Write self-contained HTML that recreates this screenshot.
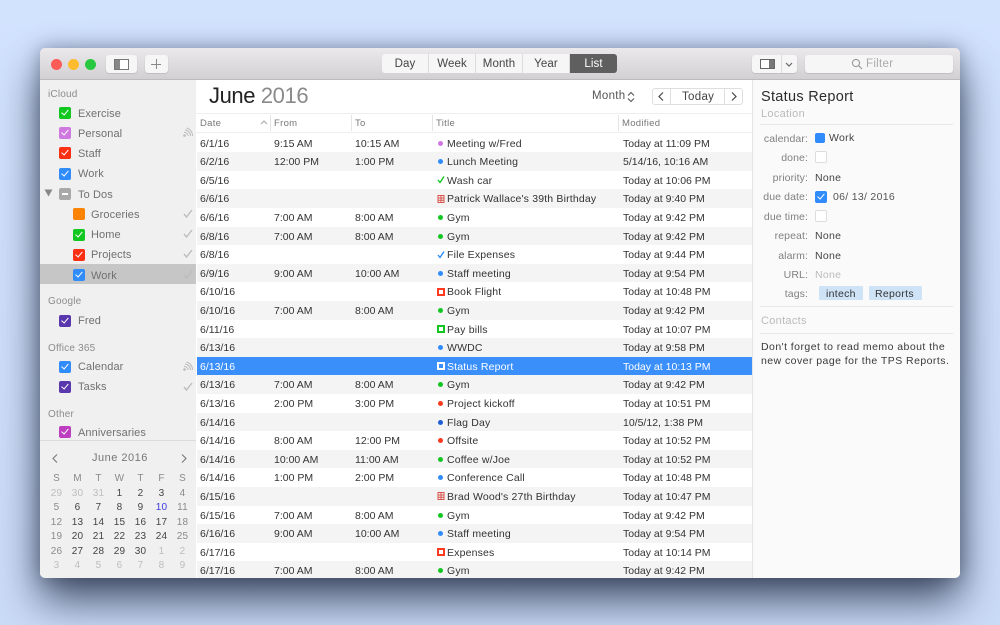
<!DOCTYPE html>
<html><head><meta charset="utf-8"><style>
html,body{margin:0;padding:0}
body{width:1000px;height:625px;overflow:hidden;position:relative;background:linear-gradient(180deg,#d2e3fe 0%,#cbdcf8 100%);font-family:"Liberation Sans",sans-serif;font-size:11px;letter-spacing:.3px;color:#3a3a3a}
#win{position:absolute;left:40px;top:48px;width:920px;height:530px;border-radius:5px;box-shadow:0 22px 42px rgba(30,40,65,.8),0 0 18px rgba(50,60,85,.4)}
.a{position:absolute;white-space:nowrap;line-height:14px}
.b{position:absolute;box-sizing:border-box}
#tb{position:absolute;left:40px;top:48px;width:920px;height:32px;border-radius:5px 5px 0 0;background:linear-gradient(180deg,#ebe9eb,#d2d0d2);border-bottom:1px solid #bdbcbd;box-sizing:border-box}
.light{position:absolute;top:59px;width:11px;height:11px;border-radius:50%}
.btn{position:absolute;top:55px;height:18px;background:#f6f6f6;border-radius:3px;box-shadow:0 .5px 1px rgba(0,0,0,.2)}
.seg{position:absolute;top:54px;height:19px;width:47px;text-align:center;line-height:21px;background:#f6f6f6;border-right:1px solid #dcdcdc;box-sizing:border-box;color:#444;font-size:11.5px;letter-spacing:.1px}
#side{position:absolute;left:40px;top:80px;width:156px;height:498px;background:#f0f0f0;border-radius:0 0 0 5px}
#main{position:absolute;left:196px;top:80px;width:556px;height:498px;background:#fff;overflow:hidden}
#panel{position:absolute;left:752px;top:80px;width:208px;height:498px;background:#fafafa;border-left:1px solid #e4e4e4;box-sizing:border-box;border-radius:0 0 5px 0}
.sh{color:#8c8c8c;font-size:10px;left:48px;margin-top:1px;letter-spacing:.2px}
.si{color:#707070;font-size:11px;left:78px;margin-top:1px;letter-spacing:.1px}
.cb{position:absolute;width:11.5px;height:11.5px;border-radius:2px}
.cb.c::after{content:"";position:absolute;left:3.5px;top:1px;width:2.5px;height:6px;border-right:1.5px solid #fff;border-bottom:1.5px solid #fff;transform:rotate(40deg)}
#rows{position:absolute;left:197px;top:133.7px;width:555px;height:444.3px;overflow:hidden}
.r{position:relative;height:18.6px;line-height:20px;color:#333;font-size:10.5px;letter-spacing:0}
.r:nth-child(even){background:#f4f4f5}
.r span{position:absolute;top:0;white-space:nowrap}
.r .d{left:3px}.r .f{left:77px}.r .o{left:158px}.r .n{left:250px;letter-spacing:.17px}.r .m{left:426px}
.r .i{position:absolute;box-sizing:border-box}
.dot{left:241px;top:7px;width:5px;height:5px;border-radius:50%}
.sq{left:240px;top:5.5px;width:8px;height:8px;border:2px solid}
.ck{left:240px;top:4.5px;width:8px;height:9px}
.ch{position:absolute;top:99px;font-size:9.5px;color:#777}
.lb{position:absolute;right:192px;left:auto;color:#808080;font-size:10.5px;line-height:14px;white-space:nowrap;margin-top:1px;letter-spacing:.1px}
.v{left:815px;color:#444;font-size:10.5px;margin-top:1px}
.hr{position:absolute;left:760px;width:193px;height:1px;background:#e8e8e8}
#cal{position:absolute;left:46px;top:472px;display:grid;grid-template-columns:repeat(7,21px);grid-auto-rows:14.5px;text-align:center;line-height:14.5px;font-size:10px;color:#444;letter-spacing:.2px}
#cal .l{color:#bdbdbd}#cal .g{color:#8a8a8a}
</style></head><body>
<div id="win"></div>
<div id="tb"></div>
<div class="light" style="left:51px;background:#fc5b57"></div>
<div class="light" style="left:68px;background:#fdbc2e"></div>
<div class="light" style="left:85px;background:#2ac840"></div>
<div class="btn" style="left:106px;width:31px"></div>
<div class="b" style="left:114px;top:59px;width:15px;height:11px;border:1px solid #777;background:linear-gradient(90deg,#888 0 5px,#fff 5px)"></div>
<div class="btn" style="left:145px;width:23px"></div>
<div class="b" style="left:151px;top:64px;width:10px;height:1px;background:#888"></div>
<div class="b" style="left:156px;top:59px;width:1px;height:10px;background:#888"></div>

<div class="seg" style="left:382px;border-radius:3px 0 0 3px">Day</div>
<div class="seg" style="left:429px">Week</div>
<div class="seg" style="left:476px">Month</div>
<div class="seg" style="left:523px">Year</div>
<div class="seg" style="left:570px;background:#5f5f5f;color:#fff;border:0;border-radius:0 3px 3px 0">List</div>

<div class="btn" style="left:752px;width:45px"></div>
<div class="b" style="left:781px;top:55px;width:1px;height:18px;background:#ddd"></div>
<div class="b" style="left:760px;top:59px;width:15px;height:10px;border:1px solid #666;background:linear-gradient(90deg,#fff 0 8px,#777 8px)"></div>
<svg class="b" style="left:785px;top:62px" width="8" height="5" viewBox="0 0 8 5"><path d="M1 1l3 3 3-3" fill="none" stroke="#666" stroke-width="1.2"/></svg>
<div class="btn" style="left:805px;width:148px"></div>
<svg class="b" style="left:851px;top:58px" width="12" height="12" viewBox="0 0 12 12"><circle cx="5" cy="5" r="3.6" fill="none" stroke="#999" stroke-width="1.1"/><path d="M7.7 7.700L11 11" stroke="#999" stroke-width="1.2"/></svg>
<div class="a" style="left:866px;top:57px;color:#aaa;font-size:11.5px">Filter</div>

<div id="side"></div>
<div class="a sh" style="top:87px">iCloud</div>
<div class="cb c" style="left:59px;top:107px;background:#12c71f"></div><div class="a si" style="top:105.500px">Exercise</div>
<div class="cb c" style="left:59px;top:127px;background:#cf78e0"></div><div class="a si" style="top:125.500px">Personal</div>
<div class="cb c" style="left:59px;top:147px;background:#fb2f12"></div><div class="a si" style="top:146px">Staff</div>
<div class="cb c" style="left:59px;top:168px;background:#2f8cfa"></div><div class="a si" style="top:166px">Work</div>
<svg class="b" style="left:44px;top:189px" width="9" height="8" viewBox="0 0 9 8"><path d="M.5 .5h8L4.500 7.500z" fill="#888"/></svg>
<div class="cb" style="left:59px;top:188px;background:#a9a9a9"></div><div class="b" style="left:61.500px;top:193px;width:6px;height:1.500px;background:#fff"></div><div class="a si" style="top:186.500px">To Dos</div>
<div class="cb" style="left:73px;top:208px;background:#fb8306"></div><div class="a si" style="left:91px;top:207px">Groceries</div>
<div class="cb c" style="left:73px;top:229px;background:#12c71f"></div><div class="a si" style="left:91px;top:227px">Home</div>
<div class="cb c" style="left:73px;top:249px;background:#fb2f12"></div><div class="a si" style="left:91px;top:247px">Projects</div>
<div class="b" style="left:40px;top:264px;width:156px;height:20px;background:#c6c6c6"></div>
<div class="cb c" style="left:73px;top:269px;background:#2f8cfa"></div><div class="a si" style="left:91px;top:267.500px">Work</div>
<div class="a sh" style="top:294px">Google</div>
<div class="cb c" style="left:59px;top:315px;background:#5a37ad"></div><div class="a si" style="top:313px">Fred</div>
<div class="a sh" style="top:341px">Office 365</div>
<div class="cb c" style="left:59px;top:361px;background:#2f8cfa"></div><div class="a si" style="top:359px">Calendar</div>
<div class="cb c" style="left:59px;top:381px;background:#5a37ad"></div><div class="a si" style="top:379px">Tasks</div>
<div class="a sh" style="top:407px">Other</div>
<div class="cb c" style="left:59px;top:426px;background:#bd3fc0"></div><div class="a si" style="top:425px">Anniversaries</div>

<svg class="b" style="left:183px;top:127px" width="11" height="10" viewBox="0 0 11 10" fill="none" stroke="#bbb" stroke-width="1"><circle cx="1.500" cy="8.500" r=".8" fill="#bbb"/><path d="M1 5.500a3.500 3.500 0 0 1 4 3.500M2 3a6 6 0 0 1 5.500 6M3.500 1a8 8 0 0 1 6 8"/></svg>
<svg class="b" style="left:183px;top:361px" width="11" height="10" viewBox="0 0 11 10" fill="none" stroke="#bbb" stroke-width="1"><circle cx="1.500" cy="8.500" r=".8" fill="#bbb"/><path d="M1 5.500a3.500 3.500 0 0 1 4 3.500M2 3a6 6 0 0 1 5.500 6M3.500 1a8 8 0 0 1 6 8"/></svg>
<svg class="b" style="left:183px;top:209px" width="10" height="9" viewBox="0 0 10 9"><path d="M1 5l2.500 3L9 1" fill="none" stroke="#bdbdbd" stroke-width="1.400"/></svg>
<svg class="b" style="left:183px;top:229px" width="10" height="9" viewBox="0 0 10 9"><path d="M1 5l2.500 3L9 1" fill="none" stroke="#bdbdbd" stroke-width="1.400"/></svg>
<svg class="b" style="left:183px;top:249px" width="10" height="9" viewBox="0 0 10 9"><path d="M1 5l2.500 3L9 1" fill="none" stroke="#bdbdbd" stroke-width="1.400"/></svg>
<svg class="b" style="left:183px;top:270px" width="10" height="9" viewBox="0 0 10 9"><path d="M1 5l2.500 3L9 1" fill="none" stroke="#bcbcbc" stroke-width="1.400"/></svg>
<svg class="b" style="left:183px;top:382px" width="10" height="9" viewBox="0 0 10 9"><path d="M1 5l2.500 3L9 1" fill="none" stroke="#bdbdbd" stroke-width="1.400"/></svg>

<div class="b" style="left:40px;top:440px;width:156px;height:1px;background:#dcdcdc"></div>
<svg class="b" style="left:52px;top:454px" width="6" height="9" viewBox="0 0 6 9"><path d="M5 .5l-4 4 4 4" fill="none" stroke="#777" stroke-width="1.100"/></svg>
<svg class="b" style="left:181px;top:454px" width="6" height="9" viewBox="0 0 6 9"><path d="M1 .5l4 4-4 4" fill="none" stroke="#777" stroke-width="1.100"/></svg>
<div class="a" style="left:92px;top:451px;color:#777;font-size:11px;letter-spacing:.5px">June 2016</div>
<div id="cal">
<span class="g">S</span><span class="g">M</span><span class="g">T</span><span class="g">W</span><span class="g">T</span><span class="g">F</span><span class="g">S</span>
<span class="l">29</span><span class="l">30</span><span class="l">31</span><span>1</span><span>2</span><span>3</span><span class="g">4</span>
<span class="g">5</span><span>6</span><span>7</span><span>8</span><span>9</span><span style="color:#3a3ae0">10</span><span class="g">11</span>
<span class="g">12</span><span>13</span><span>14</span><span>15</span><span>16</span><span>17</span><span class="g">18</span>
<span class="g">19</span><span>20</span><span>21</span><span>22</span><span>23</span><span>24</span><span class="g">25</span>
<span class="g">26</span><span>27</span><span>28</span><span>29</span><span>30</span><span class="l">1</span><span class="l">2</span>
<span class="l">3</span><span class="l">4</span><span class="l">5</span><span class="l">6</span><span class="l">7</span><span class="l">8</span><span class="l">9</span>
</div>

<div id="main">
<div class="a" style="left:13px;top:2px;line-height:28px;font-size:22px;letter-spacing:-.4px;color:#222">June <span style="color:#8a8a8a">2016</span></div>
<div class="a" style="left:396px;top:9px;color:#555;font-size:11.500px">Month</div>
<svg class="b" style="left:431px;top:11px" width="8" height="12" viewBox="0 0 8 12"><path d="M1 4.500l3-3 3 3M1 7.500l3 3 3-3" fill="none" stroke="#555" stroke-width="1.100"/></svg>
<div class="b" style="left:456px;top:8px;width:91px;height:17px;background:#fff;border:1px solid #dedede;border-radius:3px"></div>
<div class="b" style="left:474px;top:8px;width:1px;height:17px;background:#dedede"></div>
<div class="b" style="left:528px;top:8px;width:1px;height:17px;background:#dedede"></div>
<svg class="b" style="left:462px;top:12px" width="6" height="9" viewBox="0 0 6 9"><path d="M5 .5l-4 4 4 4" fill="none" stroke="#444" stroke-width="1.200"/></svg>
<svg class="b" style="left:535px;top:12px" width="6" height="9" viewBox="0 0 6 9"><path d="M1 .5l4 4-4 4" fill="none" stroke="#444" stroke-width="1.200"/></svg>
<div class="a" style="left:486px;top:10px;color:#444;font-size:11.500px">Today</div>
<div class="b" style="left:0;top:33px;width:556px;height:1px;background:#eee"></div>
<div class="b" style="left:0;top:52px;width:556px;height:1px;background:#eee"></div>
<div class="ch a" style="left:4px;top:37px">Date</div>
<div class="ch a" style="left:78px;top:37px">From</div>
<div class="ch a" style="left:159px;top:37px">To</div>
<div class="ch a" style="left:240px;top:37px">Title</div>
<div class="ch a" style="left:426px;top:37px">Modified</div>
<svg class="b" style="left:64px;top:40px" width="8" height="5" viewBox="0 0 8 5"><path d="M1 4l3-3 3 3" fill="none" stroke="#aaa" stroke-width="1.100"/></svg>
<div class="b" style="left:74px;top:35px;width:1px;height:16px;background:#e4e4e4"></div>
<div class="b" style="left:155px;top:35px;width:1px;height:16px;background:#e4e4e4"></div>
<div class="b" style="left:236px;top:35px;width:1px;height:16px;background:#e4e4e4"></div>
<div class="b" style="left:422px;top:35px;width:1px;height:16px;background:#e4e4e4"></div>
</div>

<div id="rows">
<div class="r"><span class="d">6/1/16</span><span class="f">9:15 AM</span><span class="o">10:15 AM</span><i class="i dot" style="background:#cf78e0"></i><span class="n">Meeting w/Fred</span><span class="m">Today at 11:09 PM</span></div>
<div class="r"><span class="d">6/2/16</span><span class="f">12:00 PM</span><span class="o">1:00 PM</span><i class="i dot" style="background:#2f8cfa"></i><span class="n">Lunch Meeting</span><span class="m">5/14/16, 10:16 AM</span></div>
<div class="r"><span class="d">6/5/16</span><svg class="i ck" viewBox="0 0 8 9"><path d="M1 5l2 2.500L7 1.500" fill="none" stroke="#12c71f" stroke-width="1.400"/></svg><span class="n">Wash car</span><span class="m">Today at 10:06 PM</span></div>
<div class="r"><span class="d">6/6/16</span><svg class="i ck" viewBox="0 0 8 9"><path d="M1 1.500h6v7H1zM1 4h6M1 6.200h6M4 1.500v7" fill="none" stroke="#d8544c" stroke-width="1"/></svg><span class="n">Patrick Wallace's 39th Birthday</span><span class="m">Today at 9:40 PM</span></div>
<div class="r"><span class="d">6/6/16</span><span class="f">7:00 AM</span><span class="o">8:00 AM</span><i class="i dot" style="background:#12c71f"></i><span class="n">Gym</span><span class="m">Today at 9:42 PM</span></div>
<div class="r"><span class="d">6/8/16</span><span class="f">7:00 AM</span><span class="o">8:00 AM</span><i class="i dot" style="background:#12c71f"></i><span class="n">Gym</span><span class="m">Today at 9:42 PM</span></div>
<div class="r"><span class="d">6/8/16</span><svg class="i ck" viewBox="0 0 8 9"><path d="M1 5l2 2.500L7 1.500" fill="none" stroke="#2f8cfa" stroke-width="1.400"/></svg><span class="n">File Expenses</span><span class="m">Today at 9:44 PM</span></div>
<div class="r"><span class="d">6/9/16</span><span class="f">9:00 AM</span><span class="o">10:00 AM</span><i class="i dot" style="background:#2f8cfa"></i><span class="n">Staff meeting</span><span class="m">Today at 9:54 PM</span></div>
<div class="r"><span class="d">6/10/16</span><i class="i sq" style="border-color:#fb3a20"></i><span class="n">Book Flight</span><span class="m">Today at 10:48 PM</span></div>
<div class="r"><span class="d">6/10/16</span><span class="f">7:00 AM</span><span class="o">8:00 AM</span><i class="i dot" style="background:#12c71f"></i><span class="n">Gym</span><span class="m">Today at 9:42 PM</span></div>
<div class="r"><span class="d">6/11/16</span><i class="i sq" style="border-color:#12c71f"></i><span class="n">Pay bills</span><span class="m">Today at 10:07 PM</span></div>
<div class="r"><span class="d">6/13/16</span><i class="i dot" style="background:#2f8cfa"></i><span class="n">WWDC</span><span class="m">Today at 9:58 PM</span></div>
<div class="r" style="background:#3b8ffb;color:#fff"><span class="d">6/13/16</span><i class="i sq" style="border-color:#fff"></i><span class="n">Status Report</span><span class="m">Today at 10:13 PM</span></div>
<div class="r"><span class="d">6/13/16</span><span class="f">7:00 AM</span><span class="o">8:00 AM</span><i class="i dot" style="background:#12c71f"></i><span class="n">Gym</span><span class="m">Today at 9:42 PM</span></div>
<div class="r"><span class="d">6/13/16</span><span class="f">2:00 PM</span><span class="o">3:00 PM</span><i class="i dot" style="background:#fb3a20"></i><span class="n">Project kickoff</span><span class="m">Today at 10:51 PM</span></div>
<div class="r"><span class="d">6/14/16</span><i class="i dot" style="background:#1e5fd8"></i><span class="n">Flag Day</span><span class="m">10/5/12, 1:38 PM</span></div>
<div class="r"><span class="d">6/14/16</span><span class="f">8:00 AM</span><span class="o">12:00 PM</span><i class="i dot" style="background:#fb3a20"></i><span class="n">Offsite</span><span class="m">Today at 10:52 PM</span></div>
<div class="r"><span class="d">6/14/16</span><span class="f">10:00 AM</span><span class="o">11:00 AM</span><i class="i dot" style="background:#12c71f"></i><span class="n">Coffee w/Joe</span><span class="m">Today at 10:52 PM</span></div>
<div class="r"><span class="d">6/14/16</span><span class="f">1:00 PM</span><span class="o">2:00 PM</span><i class="i dot" style="background:#2f8cfa"></i><span class="n">Conference Call</span><span class="m">Today at 10:48 PM</span></div>
<div class="r"><span class="d">6/15/16</span><svg class="i ck" viewBox="0 0 8 9"><path d="M1 1.500h6v7H1zM1 4h6M1 6.200h6M4 1.500v7" fill="none" stroke="#d8544c" stroke-width="1"/></svg><span class="n">Brad Wood's 27th Birthday</span><span class="m">Today at 10:47 PM</span></div>
<div class="r"><span class="d">6/15/16</span><span class="f">7:00 AM</span><span class="o">8:00 AM</span><i class="i dot" style="background:#12c71f"></i><span class="n">Gym</span><span class="m">Today at 9:42 PM</span></div>
<div class="r"><span class="d">6/16/16</span><span class="f">9:00 AM</span><span class="o">10:00 AM</span><i class="i dot" style="background:#2f8cfa"></i><span class="n">Staff meeting</span><span class="m">Today at 9:54 PM</span></div>
<div class="r"><span class="d">6/17/16</span><i class="i sq" style="border-color:#fb3a20"></i><span class="n">Expenses</span><span class="m">Today at 10:14 PM</span></div>
<div class="r"><span class="d">6/17/16</span><span class="f">7:00 AM</span><span class="o">8:00 AM</span><i class="i dot" style="background:#12c71f"></i><span class="n">Gym</span><span class="m">Today at 9:42 PM</span></div>
</div>

<div id="panel"></div>
<div class="a" style="left:761px;top:90px;font-size:14.500px;color:#2c2c2c">Status Report</div>
<div class="a" style="left:761px;top:107px;color:#bbb;font-size:11px">Location</div>
<div class="hr" style="top:124px"></div>
<div class="lb" style="top:131px">calendar:</div>
<div class="b" style="left:815px;top:133px;width:10px;height:10px;border-radius:2px;background:#2f8cfa"></div>
<div class="a v" style="left:829px;top:130px">Work</div>
<div class="lb" style="top:150px">done:</div>
<div class="b" style="left:815px;top:151px;width:12px;height:12px;border-radius:2px;background:#fff;border:1px solid #ddd"></div>
<div class="lb" style="top:170px">priority:</div><div class="a v" style="top:170px">None</div>
<div class="lb" style="top:189px">due date:</div>
<div class="cb c" style="left:815px;top:191px;width:12px;height:12px;background:#2f8cfa"></div>
<div class="a v" style="left:833px;top:189px;color:#555">06/ 13/ 2016</div>
<div class="lb" style="top:209px">due time:</div>
<div class="b" style="left:815px;top:210px;width:12px;height:12px;border-radius:2px;background:#fff;border:1px solid #ddd"></div>
<div class="lb" style="top:228px">repeat:</div><div class="a v" style="top:228px">None</div>
<div class="lb" style="top:248px">alarm:</div><div class="a v" style="top:248px">None</div>
<div class="lb" style="top:267px">URL:</div><div class="a v" style="top:267px;color:#bbb">None</div>
<div class="lb" style="top:286px">tags:</div>
<div class="b" style="left:819px;top:286px;width:44px;height:14px;background:#cfe3f7;border-radius:1px"></div>
<div class="a v" style="left:826px;top:286px;color:#333">intech</div>
<div class="b" style="left:869px;top:286px;width:53px;height:14px;background:#cfe3f7;border-radius:1px"></div>
<div class="a v" style="left:875px;top:286px;color:#333">Reports</div>
<div class="hr" style="top:306px"></div>
<div class="a" style="left:761px;top:314px;color:#bbb;font-size:11px">Contacts</div>
<div class="hr" style="top:333px"></div>
<div class="a" style="left:761px;top:340px;color:#3a3a3a;font-size:10.500px;letter-spacing:.45px">Don't forget to read memo about the</div>
<div class="a" style="left:761px;top:354px;color:#3a3a3a;font-size:10.500px;letter-spacing:.45px">new cover page for the TPS Reports.</div>
</body></html>
